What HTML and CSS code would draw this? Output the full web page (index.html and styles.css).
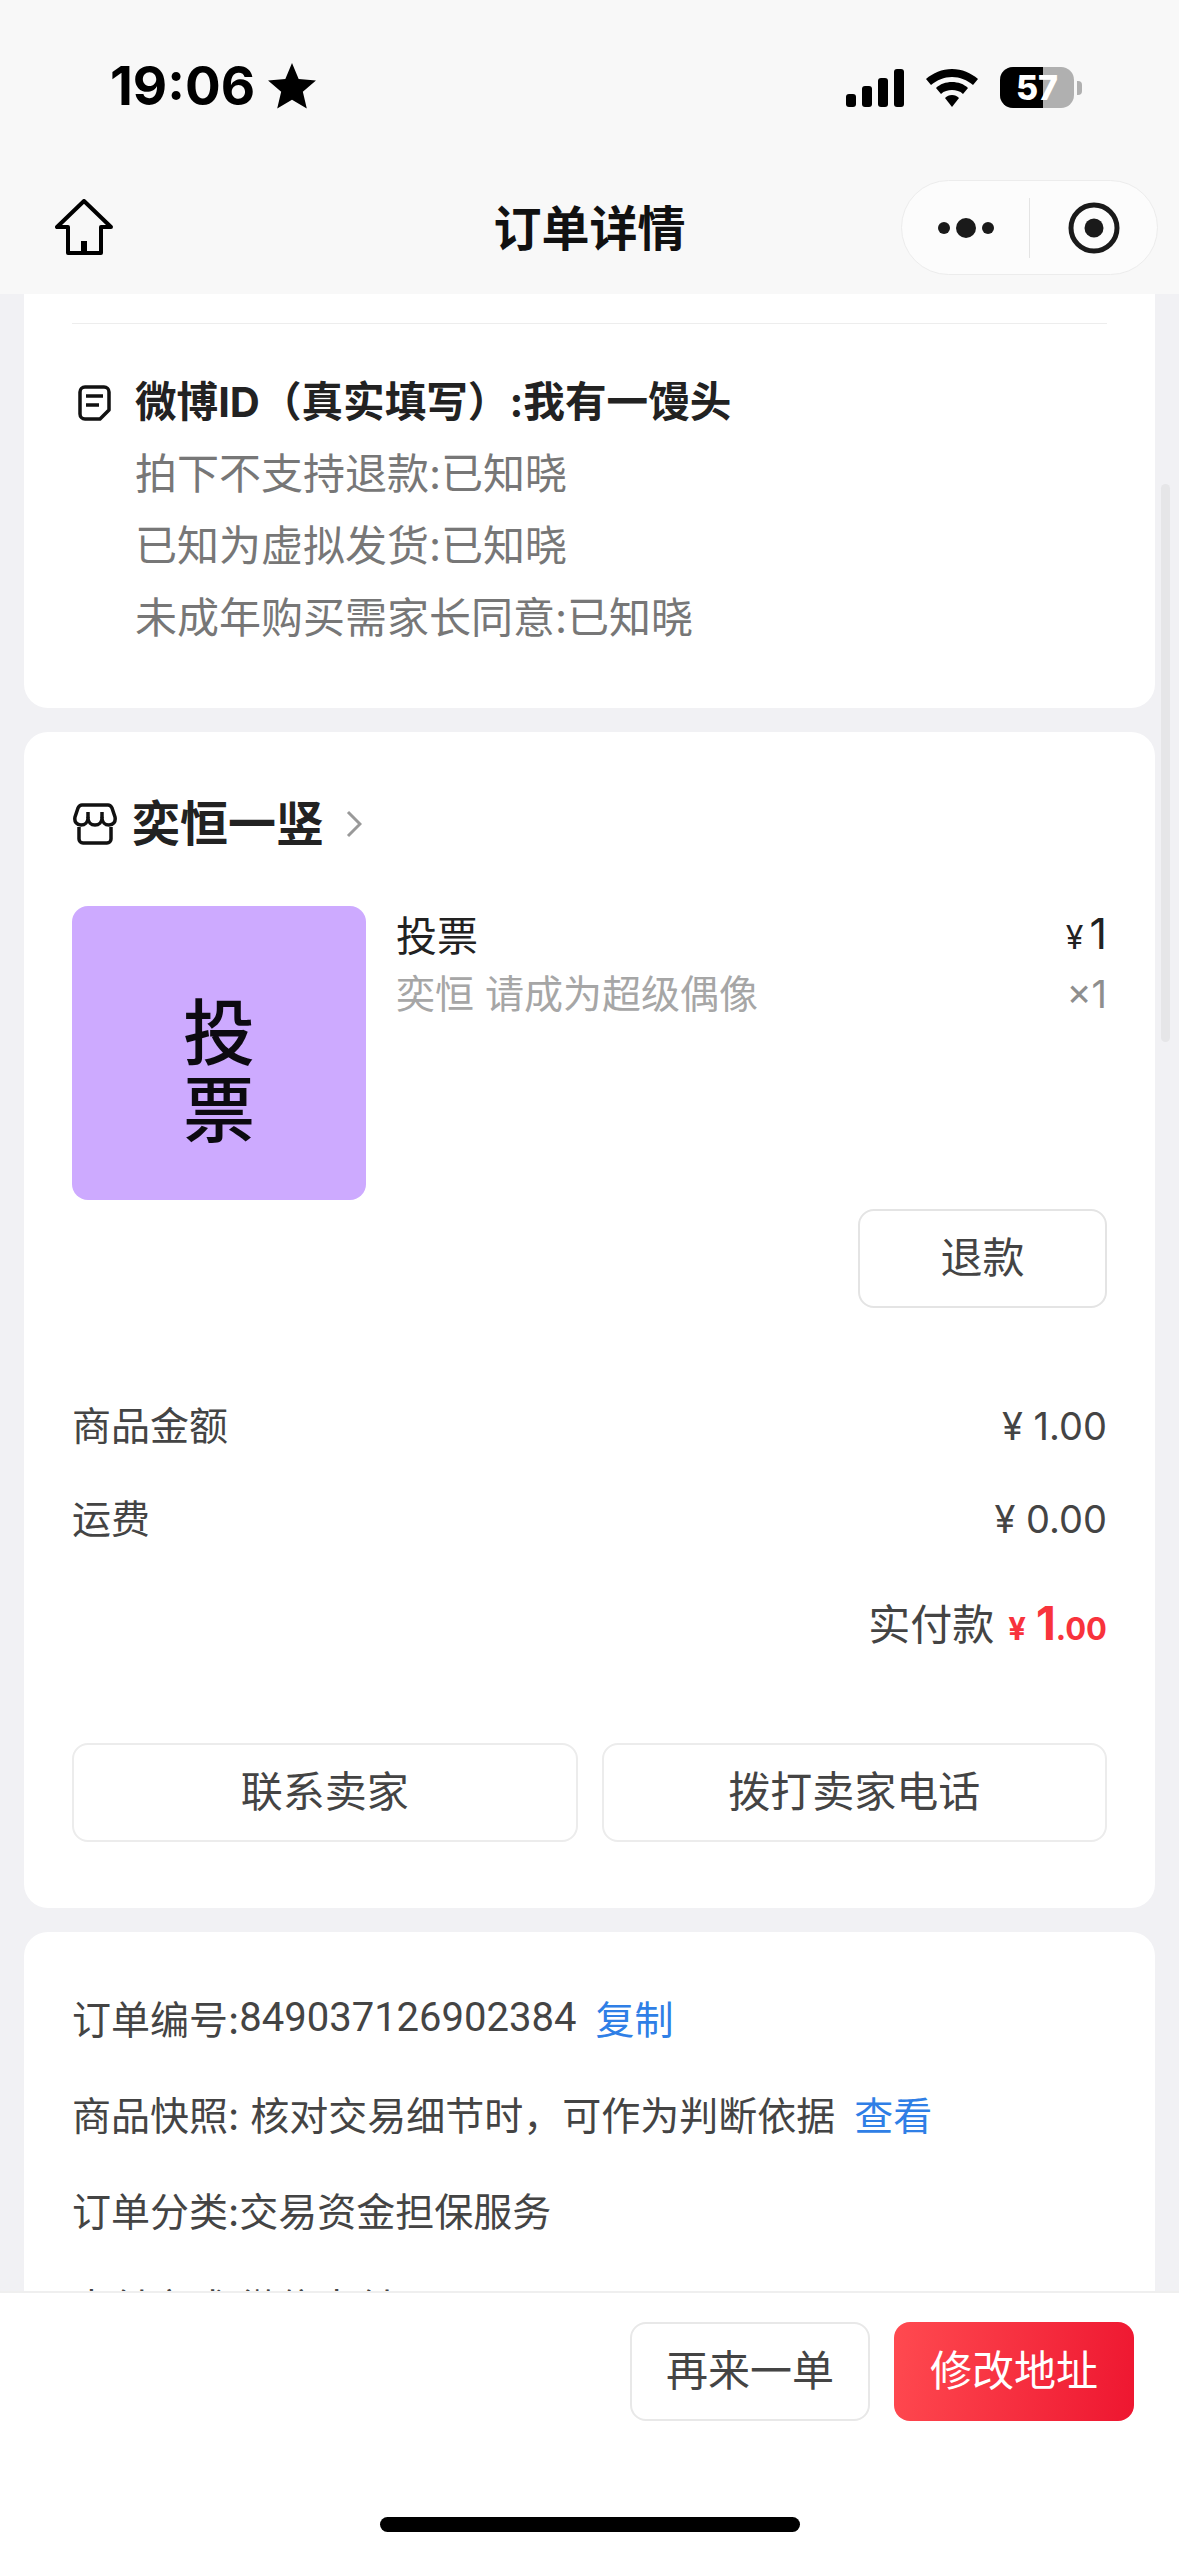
FILE: index.html
```html
<!DOCTYPE html>
<html lang="zh-CN">
<head>
    <meta charset="UTF-8">
    <meta name="viewport" content="width=device-width, initial-scale=1.0">
    <title>订单详情</title>
    <link rel="stylesheet" href="styles.css">
</head>
<body>
    <div class="page">
        <div class="top-bar">
            <div class="status-bar">
                <div class="clock">19:06
                    <svg class="star" width="50" height="48" viewBox="0 0 24 23"><path d="M12 0.5l3.2 7.6 8.3.7-6.3 5.4 1.9 8.1L12 18.1l-7.1 4.2 1.9-8.1L.5 8.8l8.3-.7z" fill="#000"/></svg>
                </div>
                <div class="status-icons">
                    <svg width="58" height="38" viewBox="0 0 58 38"><rect x="0" y="25" width="10" height="13" rx="3"/><rect x="16" y="17" width="10" height="21" rx="3"/><rect x="32" y="9" width="10" height="29" rx="3"/><rect x="48" y="0" width="10" height="38" rx="3"/></svg>
                    <svg width="52" height="38" viewBox="0 0 52 38"><path d="M26 0c10 0 19 4 26 10l-5 6c-6-5-13-8-21-8S11 11 5 16l-5-6C7 4 16 0 26 0z"/><path d="M26 13c6 0 12 2 16 6l-5 6c-3-3-7-4-11-4s-8 1-11 4l-5-6c4-4 10-6 16-6z"/><path d="M26 26c3 0 5 1 7 3l-7 9-7-9c2-2 4-3 7-3z"/></svg>
                    <div class="battery">
                        <div class="battery-body">
                            <div class="battery-fill"></div>
                            <span class="battery-num">57</span>
                        </div>
                        <div class="battery-tip"></div>
                    </div>
                </div>
            </div>
            <div class="nav-bar">
                <svg class="home-icon" width="58" height="56" viewBox="0 0 58 56" fill="none" stroke="#000" stroke-width="4" stroke-linejoin="round"><path d="M29 2L2 28h11v26h33V28h10z"/><path d="M29 54V42" stroke-width="6" stroke-linejoin="miter"/></svg>
                <div class="nav-title">订单详情</div>
                <div class="capsule">
                    <div class="capsule-side">
                        <svg width="56" height="22" viewBox="0 0 56 22" fill="#1a1a1a"><circle cx="6" cy="11" r="6"/><circle cx="28" cy="11" r="10"/><circle cx="50" cy="11" r="6"/></svg>
                    </div>
                    <div class="capsule-line"></div>
                    <div class="capsule-side">
                        <svg width="52" height="52" viewBox="0 0 52 52"><circle cx="26" cy="26" r="23" fill="none" stroke="#1a1a1a" stroke-width="5"/><circle cx="26" cy="26" r="9.500" fill="#1a1a1a"/></svg>
                    </div>
                </div>
            </div>
        </div>

        <div class="content">
            <div class="card card-form">
                <div class="divider"></div>
                <div class="form-info">
                    <svg class="note-icon" width="33" height="36" viewBox="0 0 33 36" fill="none" stroke="#111" stroke-width="3.500" stroke-linejoin="round"><path d="M7 2h19a5 5 0 0 1 5 5v18l-9 9H7a5 5 0 0 1-5-5V7a5 5 0 0 1 5-5z"/><path d="M8 11h17M8 20h13"/></svg>
                    <div class="form-lines">
                        <div class="form-title">微博ID（真实填写）:我有一馒头</div>
                        <div class="form-line">拍下不支持退款:已知晓</div>
                        <div class="form-line">已知为虚拟发货:已知晓</div>
                        <div class="form-line">未成年购买需家长同意:已知晓</div>
                    </div>
                </div>
            </div>

            <div class="card card-order">
                <div class="shop-row">
                    <svg class="shop-icon" width="44" height="42" viewBox="0 0 44 42" fill="none" stroke="#111" stroke-width="3.500" stroke-linejoin="round"><path d="M9 2h26c2 0 3 1 4 3l3 9c1 5-2 8-6 8s-7-3-7-7c0 4-3 7-7 7s-7-3-7-7c0 4-3 7-7 7s-7-3-6-8l3-9c1-2 2-3 4-3z"/><path d="M15 9v6M29 9v6"/><path d="M6 24v12a4 4 0 0 0 4 4h24a4 4 0 0 0 4-4V24"/></svg>
                    <span class="shop-name">奕恒一竖</span>
                    <svg class="shop-arrow" width="16" height="28" viewBox="0 0 16 28" fill="none" stroke="#999" stroke-width="3"><path d="M2 2l12 12L2 26"/></svg>
                </div>
                <div class="goods">
                    <div class="goods-pic"><span>投</span><span>票</span></div>
                    <div class="goods-info">
                        <div class="goods-top">
                            <span class="goods-name">投票</span>
                            <span class="goods-price"><small>¥</small> 1</span>
                        </div>
                        <div class="goods-bottom">
                            <span class="goods-sku">奕恒 请成为超级偶像</span>
                            <span class="goods-count">×1</span>
                        </div>
                    </div>
                </div>
                <div class="refund-row">
                    <div class="btn btn-refund">退款</div>
                </div>
                <div class="fee-row">
                    <span>商品金额</span>
                    <span class="fee-num">¥ 1.00</span>
                </div>
                <div class="fee-row">
                    <span>运费</span>
                    <span class="fee-num">¥ 0.00</span>
                </div>
                <div class="pay-row">
                    <span>实付款</span>
                    <span class="pay-num"><small>¥</small> <b>1</b><small>.00</small></span>
                </div>
                <div class="contact-row">
                    <div class="btn btn-contact">联系卖家</div>
                    <div class="btn btn-contact">拨打卖家电话</div>
                </div>
            </div>

            <div class="card card-meta">
                <div class="meta-row">订单编号:<span class="order-no">849037126902384</span><a class="link">复制</a></div>
                <div class="meta-row">商品快照: 核对交易细节时，可作为判断依据<a class="link">查看</a></div>
                <div class="meta-row">订单分类:交易资金担保服务</div>
                <div class="meta-row">支付方式:微信支付</div>
            </div>

            <div class="scroll-thumb"></div>
        </div>

        <div class="bottom-bar">
            <div class="bottom-actions">
                <div class="btn btn-again">再来一单</div>
                <div class="btn btn-address">修改地址</div>
            </div>
            <div class="home-bar"></div>
        </div>
    </div>
</body>
</html>
```
FILE: styles.css
```css
* {
    box-sizing: border-box;
}
html, body {
    margin: 0;
    padding: 0;
}
body {
    width: 1179px;
    height: 2556px;
    overflow: hidden;
    font-family: "Inter", "Noto Sans CJK SC", sans-serif;
    background: #f1f1f4;
}
.page {
    width: 1179px;
    height: 2556px;
    display: flex;
    flex-direction: column;
    overflow: hidden;
}

/* top */
.top-bar {
    height: 294px;
    flex-shrink: 0;
    background: #f8f8f8;
}
.status-bar {
    height: 180px;
    display: flex;
    justify-content: space-between;
    align-items: flex-start;
    padding: 60px 97px 0 110px;
}
.clock {
    display: flex;
    align-items: center;
    gap: 12px;
    font-weight: 700;
    font-size: 53px;
    line-height: 52px;
    color: #000;
}
.status-icons {
    display: flex;
    align-items: center;
    gap: 22px;
    padding-top: 7px;
}
.battery {
    display: flex;
    align-items: center;
    gap: 3px;
}
.battery-body {
    position: relative;
    width: 74px;
    height: 41px;
    border-radius: 13px;
    background: #b0b0b0;
    overflow: hidden;
}
.battery-fill {
    width: 43px;
    height: 41px;
    background: #000;
}
.battery-num {
    position: absolute;
    left: 0;
    right: 0;
    top: 0;
    text-align: center;
    font-weight: 800;
    font-size: 34px;
    line-height: 41px;
    color: #fff;
}
.battery-tip {
    width: 5px;
    height: 14px;
    border-radius: 0 4px 4px 0;
    background: #b0b0b0;
}
.nav-bar {
    height: 114px;
    position: relative;
    display: flex;
    align-items: flex-start;
    justify-content: space-between;
    padding: 0 21px 0 55px;
}
.home-icon {
    margin-top: 19px;
}
.nav-title {
    position: absolute;
    left: 0;
    right: 0;
    top: 19px;
    text-align: center;
    font-size: 48px;
    line-height: 60px;
    font-weight: 700;
    color: #111;
}
.capsule {
    width: 257px;
    height: 95px;
    display: flex;
    align-items: center;
    border: 1px solid #ececec;
    border-radius: 48px;
    background: #fcfcfc;
}
.capsule-side {
    flex: 1;
    display: flex;
    justify-content: center;
    align-items: center;
}
.capsule-line {
    width: 1px;
    height: 60px;
    background: #e4e4e4;
}

/* scrolling part */
.content {
    flex: 1;
    position: relative;
    overflow: hidden;
    padding: 0 24px;
    display: flex;
    flex-direction: column;
    gap: 24px;
}
.card {
    background: #fff;
    border-radius: 24px;
    padding: 0 48px;
    flex-shrink: 0;
}
.card-form {
    height: 414px;
    border-radius: 0 0 24px 24px;
    padding-top: 29px;
}
.divider {
    height: 1px;
    background: #ededed;
}
.form-info {
    display: flex;
    align-items: flex-start;
    padding-top: 49px;
}
.note-icon {
    margin: 12px 24px 0 6px;
    flex-shrink: 0;
}
.form-lines {
    display: flex;
    flex-direction: column;
}
.form-title {
    margin-top: -1px;
    font-size: 41.600px;
    line-height: 60px;
    font-weight: 700;
    color: #222;
}
.form-line {
    margin-top: 12px;
    font-size: 42px;
    line-height: 60px;
    color: #777;
}
.card-order {
    height: 1176px;
    padding-top: 67px;
}
.shop-row {
    display: flex;
    align-items: center;
    height: 50px;
}
.shop-icon {
    margin-left: 1px;
}
.shop-name {
    margin-left: 15px;
    font-size: 48px;
    line-height: 50px;
    font-weight: 700;
    color: #222;
}
.shop-arrow {
    margin-left: 22px;
}
.goods {
    display: flex;
    margin-top: 57px;
    gap: 30px;
}
.goods-pic {
    width: 294px;
    height: 294px;
    flex-shrink: 0;
    border-radius: 16px;
    background: #cdaaff;
    display: flex;
    flex-direction: column;
    align-items: center;
    justify-content: center;
    padding-top: 36px;
    font-size: 72px;
    line-height: 77px;
    font-weight: 500;
    color: #0c0a10;
}
.goods-info {
    flex: 1;
    padding-top: 6px;
}
.goods-top, .goods-bottom {
    display: flex;
    justify-content: space-between;
    align-items: center;
}
.goods-top {
    height: 48px;
}
.goods-bottom {
    height: 46px;
    margin-top: 11px;
}
.goods-name {
    font-size: 41px;
    line-height: 48px;
    color: #222;
}
.goods-price {
    margin-top: -6px;
    font-size: 43px;
    color: #222;
    word-spacing: -6px;
}
.goods-price small {
    font-size: 32px;
}
.goods-sku {
    font-size: 39px;
    line-height: 46px;
    color: #a6a6a6;
}
.goods-count {
    font-size: 38px;
    color: #8e8e8e;
}
.btn {
    display: flex;
    align-items: center;
    justify-content: center;
    padding-bottom: 8px;
    background: #fff;
    border: 2px solid #e4e4e4;
    border-radius: 16px;
    color: #444;
}
.refund-row {
    display: flex;
    justify-content: flex-end;
    margin-top: 9px;
}
.btn-refund {
    width: 249px;
    height: 99px;
    font-size: 42px;
}
.fee-row {
    display: flex;
    justify-content: space-between;
    align-items: center;
    height: 50px;
    font-size: 39px;
    color: #444;
}
.refund-row + .fee-row {
    margin-top: 90px;
}
.fee-row + .fee-row {
    margin-top: 43px;
}
.fee-num {
    margin-top: 6px;
    font-size: 38px;
}
.pay-row {
    display: flex;
    justify-content: flex-end;
    align-items: baseline;
    gap: 14px;
    margin-top: 54px;
    font-size: 42px;
    line-height: 56px;
    color: #444;
}
.pay-num {
    color: #f8333c;
    font-weight: 700;
}
.pay-num small {
    font-size: 31px;
}
.pay-num b {
    font-size: 46px;
    font-weight: 700;
}
.contact-row {
    display: flex;
    gap: 24px;
    margin-top: 86px;
}
.btn-contact {
    flex: 1;
    height: 99px;
    font-size: 42px;
    border-color: #ececec;
}
.card-meta {
    height: 400px;
    padding-top: 55px;
}
.meta-row {
    display: flex;
    align-items: center;
    height: 60px;
    margin-bottom: 36px;
    font-size: 39px;
    color: #444;
}
.order-no {
    font-family: "Roboto", sans-serif;
    font-size: 40px;
}
.link {
    margin-left: 19px;
    font-size: 39px;
    color: #2f7fe6;
}
.scroll-thumb {
    position: absolute;
    right: 9px;
    top: 190px;
    width: 9px;
    height: 558px;
    border-radius: 5px;
    background: #e6e6e8;
}

/* bottom */
.bottom-bar {
    height: 265px;
    flex-shrink: 0;
    background: #fff;
    border-top: 2px solid #efefef;
}
.bottom-actions {
    display: flex;
    justify-content: flex-end;
    gap: 24px;
    padding: 29px 45px 0 0;
}
.btn-again {
    width: 240px;
    height: 99px;
    font-size: 42px;
    border-color: #e8e8e8;
}
.btn-address {
    width: 240px;
    height: 99px;
    font-size: 42px;
    color: #fff;
    border: none;
    background: linear-gradient(100deg, #ff4a50, #ee1630);
}
.home-bar {
    width: 420px;
    height: 15px;
    margin: 96px auto 0;
    border-radius: 8px;
    background: #000;
}
```
